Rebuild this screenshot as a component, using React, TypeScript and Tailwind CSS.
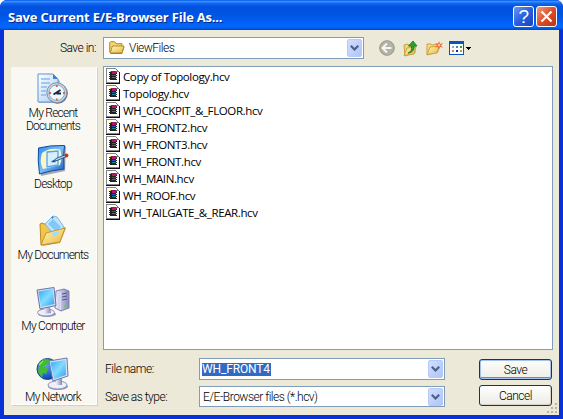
import React from "react";

const ui = "font-['Roboto','Liberation_Sans',sans-serif] font-light tracking-[-0.5px]";

function Defs() {
  return (
    <svg className="absolute h-0 w-0">
      <defs>
        <linearGradient id="folder" x1="0" y1="0" x2="1" y2="1">
          <stop offset="0" stopColor="#fffac0" />
          <stop offset="1" stopColor="#e9b53a" />
        </linearGradient>
        <linearGradient id="screen" x1="0" y1="0" x2="1" y2="1">
          <stop offset="0" stopColor="#35a5f5" />
          <stop offset=".5" stopColor="#83dcff" />
          <stop offset="1" stopColor="#2e9cf0" />
        </linearGradient>
        <linearGradient id="blue" x1="0" y1="0" x2="1" y2="1">
          <stop offset="0" stopColor="#2d8df0" />
          <stop offset=".5" stopColor="#77bdf8" />
          <stop offset="1" stopColor="#1556bd" />
        </linearGradient>
        <linearGradient id="paper" x1="0" y1="0" x2="1" y2="1">
          <stop offset="0" stopColor="#ffffff" />
          <stop offset="1" stopColor="#a9cdf5" />
        </linearGradient>
        <linearGradient id="metal" x1="0" y1="0" x2="1" y2="0">
          <stop offset="0" stopColor="#f2f2fb" />
          <stop offset="1" stopColor="#8386b8" />
        </linearGradient>
        <radialGradient id="globe" cx=".35" cy=".3" r=".75">
          <stop offset="0" stopColor="#5cb6ff" />
          <stop offset="1" stopColor="#0b3bae" />
        </radialGradient>
      </defs>
    </svg>
  );
}

function RecentIcon() {
  return (
    <svg width="32" height="32" viewBox="0 0 32 32">
      <path d="M2 2h15l6 6v22H2z" fill="#6b83ae" opacity=".5" />
      <path d="M1 1h15l5 5v23H1z" fill="url(#paper)" stroke="#5f93d6" />
      <path d="M16 1v5h5z" fill="#3f82d5" />
      <path d="M4 6h9M4 10h9M4 14h6M4 18h5M4 22h5" stroke="#8ab9ee" strokeWidth="1.5" />
      <circle cx="20.5" cy="20.5" r="10.3" fill="#5d6b7b" />
      <circle cx="19.8" cy="19.7" r="10" fill="#c6d5e2" stroke="#7b92ab" />
      <circle cx="19.8" cy="19.7" r="7.8" fill="#eef8ff" stroke="#86a6c5" />
      <path d="M19.8 12v2M19.8 25.500v2M12 20h2M26 20h2" stroke="#e8622a" strokeWidth="1.800" />
      <path d="M16.500 21.500l7-4.500M19.500 20.500h4.500" stroke="#16283c" strokeWidth="1.800" />
    </svg>
  );
}

function DesktopIcon() {
  return (
    <svg width="32" height="32" viewBox="0 0 32 32">
      <path d="M3 5l26-3-1 25-24 5z" fill="#47566f" opacity=".5" />
      <path d="M1.500 4Q13 1 27.500 1.500 26 12 27 25 15 26 2.500 30 .5 17 1.500 4z" fill="url(#blue)" stroke="#104b9e" />
      <path d="M5 9Q13 3 23 5.500 26 12 23 21 15 23 6 25 2 18 5 9z" fill="#fff4c8" />
      <path d="M10 8l11-1v14l-11 2z" fill="#d4efff" stroke="#54a4e9" strokeWidth="1.300" />
      <path d="M16 17l4-3 9-3.500.5 2-9.500 4z" fill="#b5d5ef" stroke="#274c7e" strokeWidth=".9" />
      <path d="M14.500 17.500h4" stroke="#1c57a0" strokeWidth="1.300" />
      <circle cx="29.500" cy="11.500" r="1.900" fill="#d33219" />
    </svg>
  );
}

function DocumentsIcon() {
  return (
    <svg width="32" height="32" viewBox="0 0 32 32">
      <path d="M5 31l18-3 6-15-2-1z" fill="#66624d" opacity=".6" />
      <path d="M3 9l2-1 5 2 3 3 9 2-5 13-13 2z" fill="#f1c54b" stroke="#b58b28" />
      <path d="M8 9l8-8 4 1 7 10-8 10z" fill="#bde4ff" stroke="#78b7e8" />
      <path d="M11 9l5-5 8 8-5 4z" fill="#5bb2f4" opacity=".6" />
      <path d="M15 2l1 1" stroke="#246fbd" strokeWidth="2" />
      <path d="M4 30l5-12 19-5-5 14z" fill="url(#folder)" stroke="#c69624" />
      <path d="M14 18l9-2-5 6z" fill="#a0dcfb" />
    </svg>
  );
}

function ComputerIcon() {
  return (
    <svg width="34" height="32" viewBox="0 0 34 32">
      <path d="M20 5l8-2 5 2v17l-8 3-6-3z" fill="url(#metal)" stroke="#7e82b4" />
      <path d="M26 8l5-1M26 11l5-1M26 14l5-1" stroke="#4e5792" />
      <path d="M24.500 6v18" stroke="#d9dafa" />
      <circle cx="29" cy="20.500" r="1.300" fill="#62d34b" />
      <ellipse cx="11" cy="28" rx="9" ry="3" fill="#9194b8" />
      <ellipse cx="10" cy="26.500" rx="8.500" ry="3.500" fill="#eeeef7" stroke="#8f91bb" />
      <path d="M8 20l6 1 1 6-7 1z" fill="url(#metal)" />
      <path d="M1 4l17-2.500 2 18L4 23z" fill="#d9ddf0" stroke="#6675a8" />
      <path d="M2.500 5.500L16.500 3l2 15L5 21z" fill="url(#screen)" />
    </svg>
  );
}

function NetworkIcon() {
  return (
    <svg width="34" height="34" viewBox="0 0 34 34">
      <circle cx="11.500" cy="12" r="10.500" fill="url(#globe)" stroke="#174394" />
      <path d="M3 6l5-4 6 1-2 4-4 2 4 3-2 5-3-1-1 5-4-6 1-6zM14 3l5 2-3 5-3-2z" fill="#43bb38" />
      <path d="M3 8l4-4" stroke="#91e35a" strokeWidth="1.500" />
      <ellipse cx="22" cy="29.500" rx="10" ry="3.500" fill="#8f93b3" />
      <ellipse cx="21.500" cy="28" rx="9.500" ry="4" fill="#efeff8" stroke="#8d91b9" />
      <path d="M20 22l6-1v7h-6z" fill="url(#metal)" />
      <path d="M13 4l18-3 1 18-15 5z" fill="#dadff2" stroke="#6b79a9" />
      <path d="M14.500 5.500L29.500 3l.5 15-12 4z" fill="url(#screen)" />
    </svg>
  );
}

function FileIcon() {
  return (
    <svg width="14" height="16" viewBox="0 0 14 16" shapeRendering="crispEdges" className="shrink-0">
      <path d="M0 0h10v1h1v1h1v1h1v12H0z" fill="#848484" />
      <path d="M1 1h9v1h1v1h1v1h1v10H1z" fill="#fff" />
      <path d="M13 4h1v12H0v-1h13z" fill="#111" />
      <path d="M10 1h1v1h1v1h1v1h-3z" fill="#777" />
      <path d="M10 2h1v1h-1z" fill="#fff" />
      <path d="M4 4h6v8H4z" fill="#222" />
      <path d="M3 4h1v1H3zM3 6h1v1H3zM3 8h1v1H3zM3 10h1v1H3zM10 5h1v1h-1zM10 7h1v1h-1zM10 9h1v1h-1zM10 11h1v1h-1z" fill="#222" />
      <path d="M5 3h5v1h1v1H6z" fill="#a01458" />
      <path d="M6 4h4v2H6z" fill="#b31a66" />
      <path d="M6 7h4v1H6z" fill="#2056bd" />
      <path d="M6 9h4v1H6z" fill="#168b75" />
      <path d="M4 3h1v1H4z" fill="#e8bd20" />
    </svg>
  );
}

function FolderIcon() {
  return (
    <svg width="16" height="14" viewBox="0 0 16 14">
      <path d="M1 12V2l1-1h4l2 2h5v3h2.500L13 13H2z" fill="#8b7434" />
      <path d="M.7 11V1.500L1.500.7h4l1.800 2H13V11.500H1z" fill="#f4d66a" stroke="#b18b2c" />
      <path d="M3.300 5H15l-2 7H1.300z" fill="url(#folder)" stroke="#b48b2c" />
    </svg>
  );
}

function Arrow() {
  return (
    <div className="flex h-[18px] w-[15px] items-center justify-center rounded-[2px] border border-[#b8c9f4] bg-linear-to-br from-[#d2defe] to-[#adc5fa]">
      <svg width="9" height="6" viewBox="0 0 9 6">
        <path d="M.8.8l3.700 3.700L8.200.8" fill="none" stroke="#4d6185" strokeWidth="2.200" />
      </svg>
    </div>
  );
}

function Combo({ className, children }: { className: string; children: React.ReactNode }) {
  return (
    <div className={`flex items-center border border-[#7f9db9] bg-white pr-px ${className}`}>
      <div className="flex flex-1 items-center">{children}</div>
      <Arrow />
    </div>
  );
}

function Place({ icon, className, children }: { icon: React.ReactNode; className: string; children: React.ReactNode }) {
  return (
    <div className={`flex flex-col items-center text-center text-[12px] leading-[13px] tracking-[-0.75px] ${className}`}>
      <div className="flex h-[34px] items-start">{icon}</div>
      <div className="whitespace-nowrap">{children}</div>
    </div>
  );
}

const files = [
  "Copy of Topology.hcv",
  "Topology.hcv",
  "WH_COCKPIT_&_FLOOR.hcv",
  "WH_FRONT2.hcv",
  "WH_FRONT3.hcv",
  "WH_FRONT.hcv",
  "WH_MAIN.hcv",
  "WH_ROOF.hcv",
  "WH_TAILGATE_&_REAR.hcv",
];

function Toolbar() {
  return (
    <div className="flex h-[18px] items-center">
      <svg width="16" height="16" viewBox="0 0 16 16">
        <circle cx="8" cy="8" r="7.300" fill="#b3b2aa" stroke="#969589" />
        <path d="M12.500 8H4M8 3.500L3.500 8 8 12.500" fill="none" stroke="#f7f6ed" strokeWidth="2" />
      </svg>
      <svg className="ml-[8px]" width="15" height="17" viewBox="0 0 15 17">
        <path d="M1 5l4-1 1 2 6-1v8L2 16z" fill="#f3d878" stroke="#c9a243" />
        <path d="M1 15.500L4 8l9-1-2 7z" fill="url(#folder)" stroke="#c9a243" />
        <path d="M5 13c3-1 4-3 3.500-7H5.500l4.500-5 4 5h-3c.5 4-2 7-6 7z" fill="#28a52c" stroke="#187123" strokeWidth=".8" />
      </svg>
      <svg className="ml-[8px]" width="17" height="15" viewBox="0 0 17 15">
        <path d="M1 3h4l1 1 6-1v8L1 14z" fill="#f6dc80" stroke="#c9a243" />
        <path d="M1 13.500L4 6l9-1-2 7z" fill="url(#folder)" stroke="#c9a243" />
        <path d="M13 0l1 3 3-1-2 2.500 2 2-3-.5-1 3-1-3-3 .5 2-2-2-2.500 3 1z" fill="#ed653c" />
        <circle cx="13" cy="4.300" r="1.200" fill="#ffd06b" />
      </svg>
      <svg className="ml-[6px]" width="22" height="15" viewBox="0 0 22 15" shapeRendering="crispEdges">
        <rect width="15" height="14" fill="#0756bd" />
        <rect x="1" y="3" width="13" height="10" fill="#fff" />
        <path d="M3 5h2v2H3z" fill="#95adb8" />
        <path d="M7 5h2v2H7z" fill="#4b80c6" />
        <path d="M11 5h2v2h-2z" fill="#1dab36" />
        <path d="M3 9h2v2H3z" fill="#de7760" />
        <path d="M7 9h2v2H7z" fill="#102d9b" />
        <path d="M11 9h2v2h-2z" fill="#bf9a31" />
        <path d="M17 6h5v1h-1v1h-1v1h-1V8h-1V7h-1z" fill="#000" />
      </svg>
    </div>
  );
}

export default function App() {
  return (
    <div className={`relative flex h-[419px] w-[563px] flex-col overflow-hidden rounded-t-[7px] bg-[#0831d9] text-[12px] text-black ${ui}`}>
      <Defs />
      <header className="flex h-[30px] shrink-0 items-center bg-[linear-gradient(180deg,#0058e8_0%,#368fff_5%,#1264ed_12%,#0252df_22%,#0054e4_50%,#005ef4_72%,#0168fc_90%,#0145cb_100%)] pr-[6px] pl-[8px]">
        <h1 className="flex-1 whitespace-nowrap pt-[3px] font-['Open_Sans','Noto_Sans',sans-serif] text-[13px] leading-[18px] font-bold tracking-[-0.2px] text-white [text-shadow:1px_1px_#092a7e]">Save Current E/E-Browser File As...</h1>
        <div className="mt-[3px] flex gap-[2px]">
          <button className="flex h-[21px] w-[21px] items-center justify-center rounded-[3px] border border-white bg-linear-to-br from-[#6e94f0] via-[#2860e0] to-[#1743bf] font-['Liberation_Sans',sans-serif] text-[19px] leading-[19px] text-white">?</button>
          <button className="flex h-[21px] w-[21px] items-center justify-center rounded-[3px] border border-white bg-linear-to-br from-[#ef9a7c] via-[#dc4c28] to-[#bf3210]">
            <svg width="13" height="13" viewBox="0 0 13 13"><path d="M1.500 1.500l10 10m0-10l-10 10" stroke="#fff" strokeWidth="2.200" /></svg>
          </button>
        </div>
      </header>
      <main className="relative mx-[4px] mb-[4px] flex flex-1 flex-col bg-[#ece9d8] pt-[7px] pr-[6px] pl-[7px]">
        <div className="flex h-[22px] items-center">
          <label className="w-[92px] pr-[7px] text-right">Save in:</label>
          <Combo className="h-[22px] w-[261px] pl-[5px]">
            <FolderIcon />
            <span className="ml-[4px]">ViewFiles</span>
          </Combo>
          <div className="ml-[15px]"><Toolbar /></div>
        </div>
        <div className="mt-[7px] flex">
          <aside className="mt-px flex h-[338px] w-[86px] flex-col overflow-hidden border-r border-b border-white bg-[#f9f8f3] pr-px shadow-[1px_1px_#d5d2bf]">
            <Place className="mt-[6px]" icon={<RecentIcon />}>My Recent<br />Documents</Place>
            <Place className="mt-[11px]" icon={<DesktopIcon />}>Desktop</Place>
            <Place className="mt-[24px]" icon={<DocumentsIcon />}>My Documents</Place>
            <Place className="mt-[24px]" icon={<ComputerIcon />}>My Computer</Place>
            <Place className="mt-[24px]" icon={<NetworkIcon />}>My Network</Place>
          </aside>
          <div className="ml-[6px] flex w-[450px] flex-col">
            <ul className="h-[284px] border border-[#7f9db9] bg-white pt-px pl-[2px] font-['Open_Sans','Noto_Sans',sans-serif] text-[11.500px] leading-[17px] font-normal tracking-[-0.38px]">
              {files.map((name) => (
                <li key={name} className="flex h-[17px] whitespace-nowrap">
                  <FileIcon />
                  <span className="ml-[3px]">{name}</span>
                </li>
              ))}
            </ul>
            <div className="mt-[8px] flex">
              <div className="flex flex-col gap-[6px]">
                <div className="flex items-center">
                  <label className="w-[96px] pl-[2px]">File name:</label>
                  <Combo className="h-[22px] w-[246px] pl-[2px]">
                    <span className="bg-[#316ac5] pr-px leading-[13px] font-normal tracking-[-0.15px] text-white">WH_FRONT4</span>
                  </Combo>
                </div>
                <div className="flex items-center">
                  <label className="w-[96px] pl-[2px]">Save as type:</label>
                  <Combo className="h-[21px] w-[246px] pl-[3px]"><span>E/E-Browser files (*.hcv)</span></Combo>
                </div>
              </div>
              <div className="ml-[34px] flex flex-col gap-[5px] pt-px">
                <button className="h-[21px] w-[73px] rounded-[3px] border border-[#003c74] bg-linear-to-b from-[#fdfdfb] to-[#eeede5] shadow-[inset_0_0_0_1px_#a6c1ee,inset_0_-2px_#6982ee]">Save</button>
                <button className="h-[21px] w-[73px] rounded-[3px] border border-[#003c74] bg-linear-to-b from-white to-[#ecebe4] shadow-[inset_-1px_-1px_#d6d0c5]">Cancel</button>
              </div>
            </div>
          </div>
        </div>
        <svg className="absolute right-[2px] bottom-[2px]" width="10" height="10" viewBox="0 0 10 10">
          <path d="M8 0h2v2H8zM4 4h2v2H4zM8 4h2v2H8zM0 8h2v2H0zM4 8h2v2H4zM8 8h2v2H8z" fill="#b8b4a3" />
        </svg>
      </main>
    </div>
  );
}
